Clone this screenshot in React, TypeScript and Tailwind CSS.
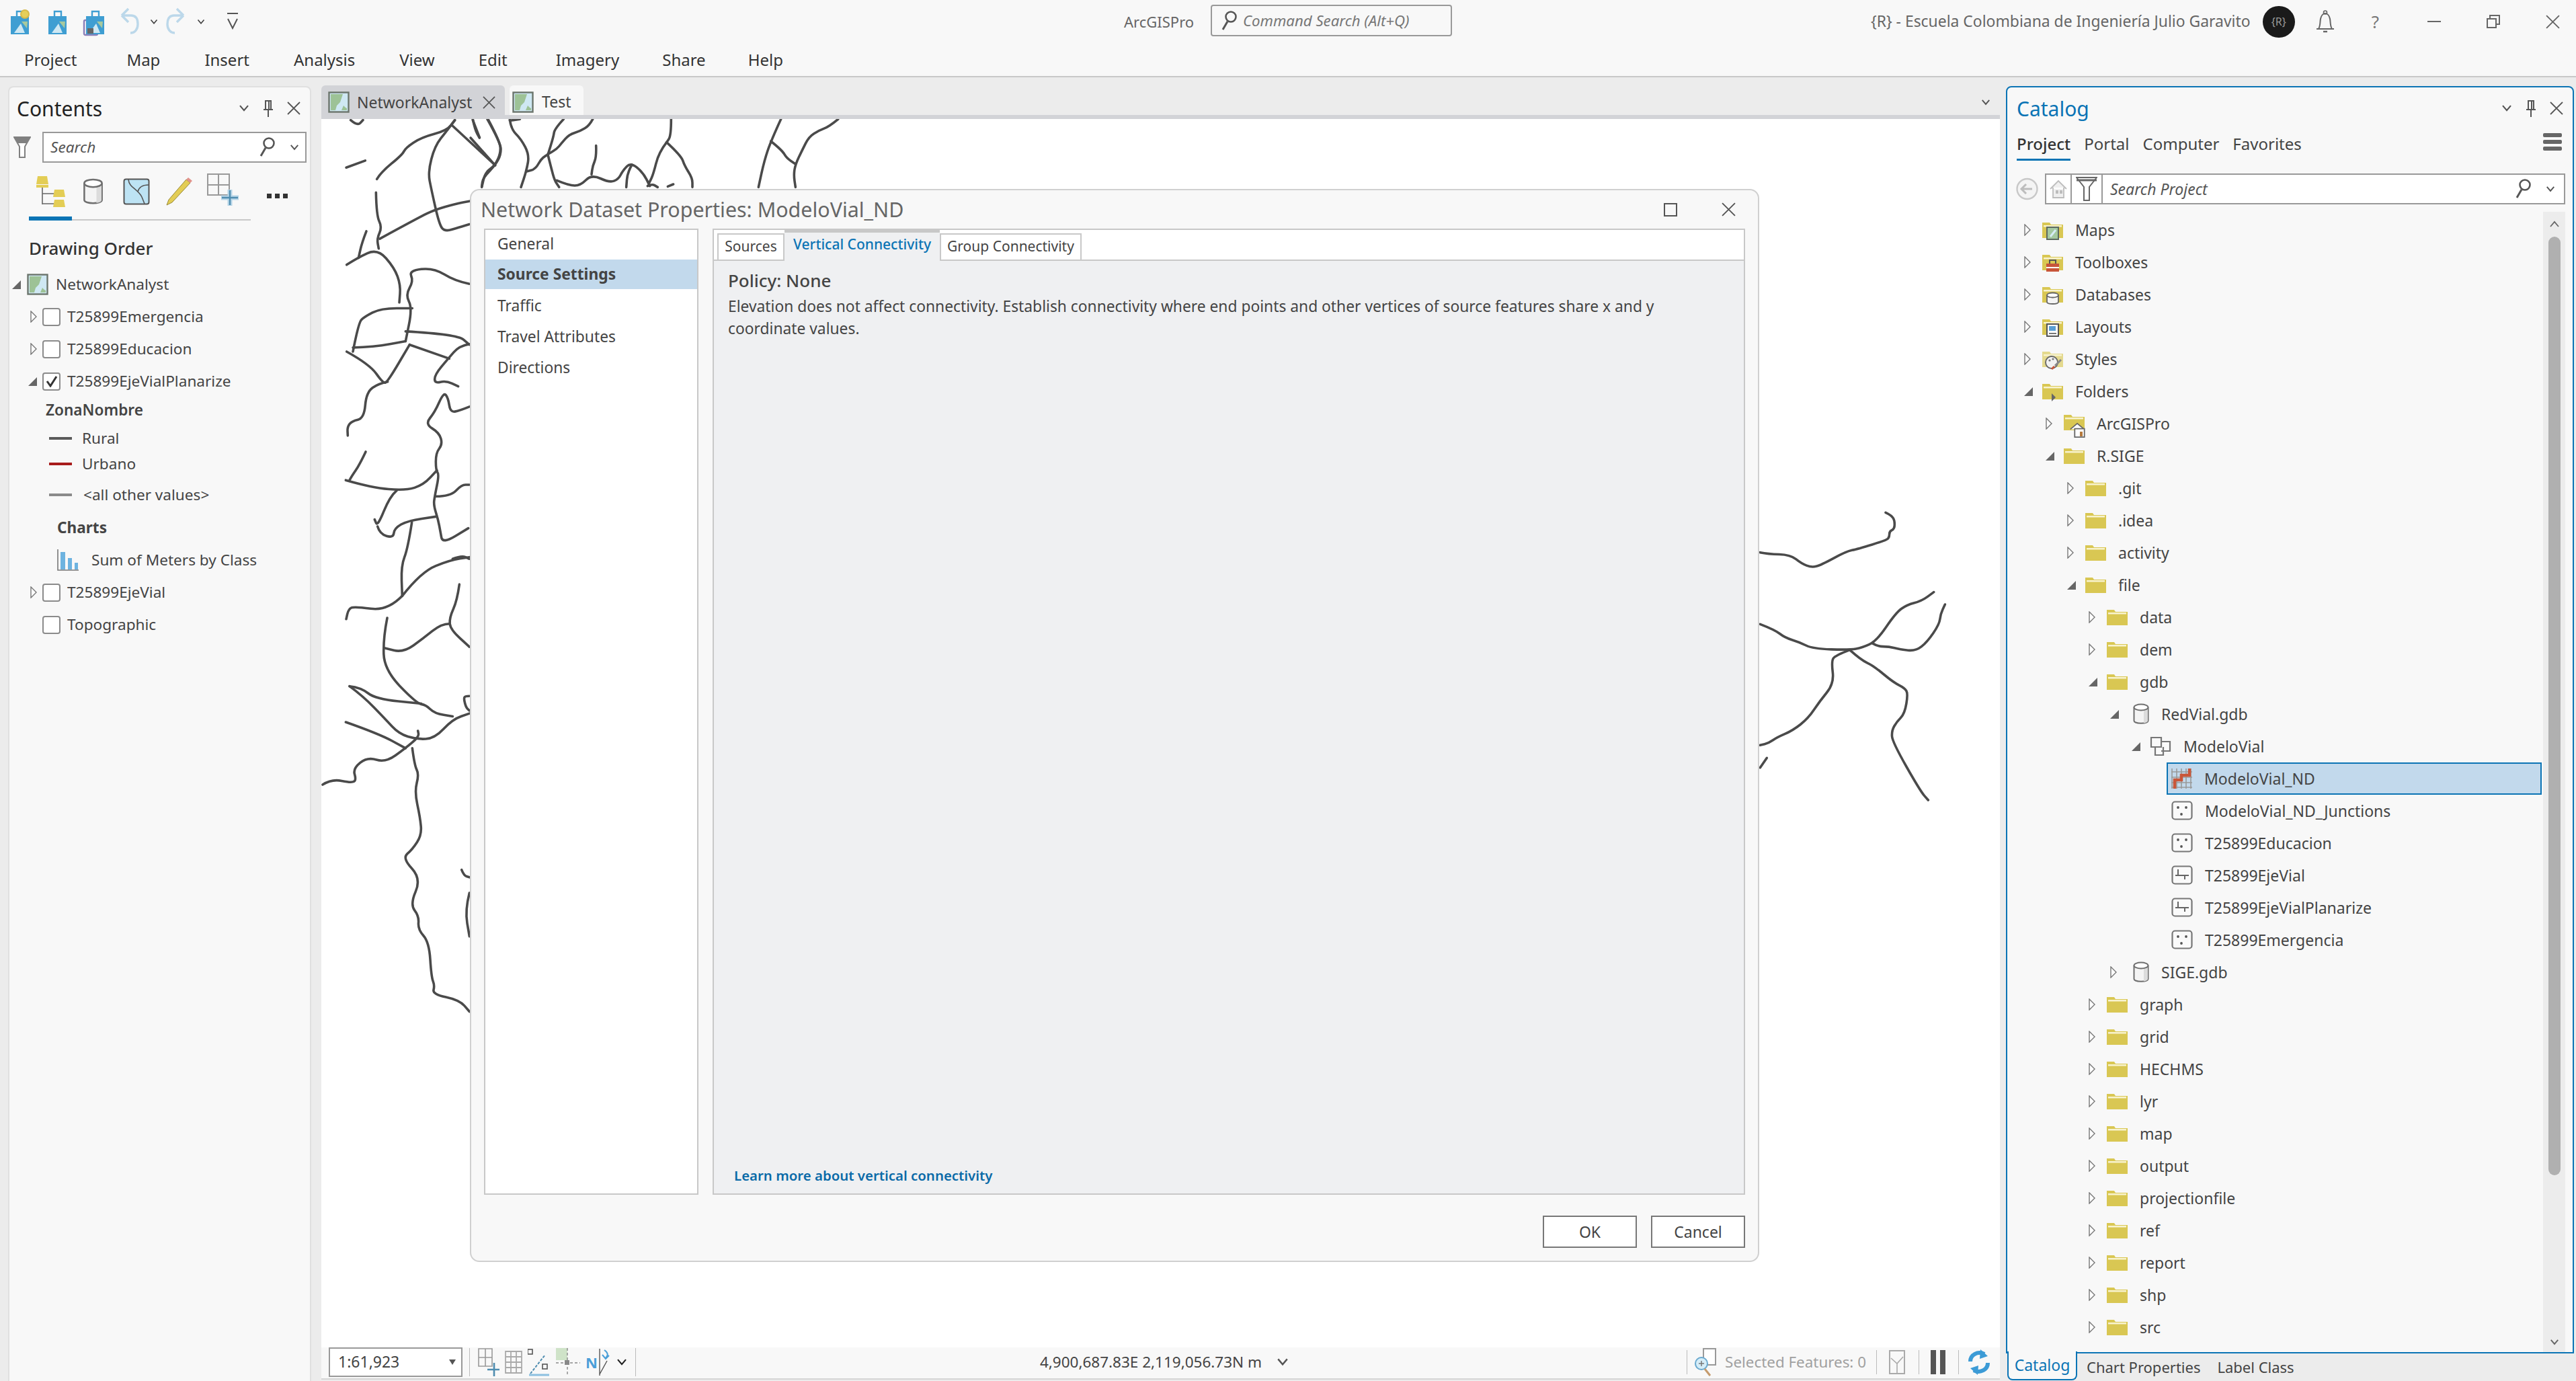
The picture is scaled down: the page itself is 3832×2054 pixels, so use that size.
import React from "react";

type Row = { label: string; level: number; state?: "open" | "closed"; icon?: string; selected?: boolean };

const catalogRows: Row[] = [
  { label: "Maps", level: 0, state: "closed", icon: "maps" },
  { label: "Toolboxes", level: 0, state: "closed", icon: "toolboxes" },
  { label: "Databases", level: 0, state: "closed", icon: "databases" },
  { label: "Layouts", level: 0, state: "closed", icon: "layouts" },
  { label: "Styles", level: 0, state: "closed", icon: "styles" },
  { label: "Folders", level: 0, state: "open", icon: "folders" },
  { label: "ArcGISPro", level: 1, state: "closed", icon: "home" },
  { label: "R.SIGE", level: 1, state: "open" },
  { label: ".git", level: 2, state: "closed" },
  { label: ".idea", level: 2, state: "closed" },
  { label: "activity", level: 2, state: "closed" },
  { label: "file", level: 2, state: "open" },
  { label: "data", level: 3, state: "closed" },
  { label: "dem", level: 3, state: "closed" },
  { label: "gdb", level: 3, state: "open" },
  { label: "RedVial.gdb", level: 4, state: "open", icon: "gdb" },
  { label: "ModeloVial", level: 5, state: "open", icon: "dataset" },
  { label: "ModeloVial_ND", level: 6, icon: "network", selected: true },
  { label: "ModeloVial_ND_Junctions", level: 6, icon: "points" },
  { label: "T25899Educacion", level: 6, icon: "points" },
  { label: "T25899EjeVial", level: 6, icon: "lines" },
  { label: "T25899EjeVialPlanarize", level: 6, icon: "lines" },
  { label: "T25899Emergencia", level: 6, icon: "points" },
  { label: "SIGE.gdb", level: 4, state: "closed", icon: "gdb" },
  { label: "graph", level: 3, state: "closed" },
  { label: "grid", level: 3, state: "closed" },
  { label: "HECHMS", level: 3, state: "closed" },
  { label: "lyr", level: 3, state: "closed" },
  { label: "map", level: 3, state: "closed" },
  { label: "output", level: 3, state: "closed" },
  { label: "projectionfile", level: 3, state: "closed" },
  { label: "ref", level: 3, state: "closed" },
  { label: "report", level: 3, state: "closed" },
  { label: "shp", level: 3, state: "closed" },
  { label: "src", level: 3, state: "closed" },
];

// traced from the map, each group has its own origin and scale
const roadGroups = [
  {
    ox: 470,
    oy: 170,
    sx: 1 / 3,
    sy: 0.861,
    lines: [
      "135,92 220,80",
      "272,112 290,100 385,70 400,58 470,40 585,28 620,10",
      "155,10 185,20 210,10",
      "620,10 585,28 530,55 500,100 515,130 550,190 575,203 640,195 685,190",
      "610,20 800,88",
      "770,10 825,50 825,70 800,88 745,110 740,125",
      "700,10 730,40",
      "268,135 270,175 295,195 272,215 280,232",
      "285,215 460,178 530,165 620,155 685,150",
      "137,260 185,248 275,232 350,265 378,295 372,325",
      "225,202 205,222 190,248",
      "685,293 620,288 525,265 415,270 435,288 400,312 430,335 400,392",
      "165,410 190,360 215,350 290,335 430,335",
      "165,403 260,402 400,392",
      "137,410 240,432 300,465 320,462 418,398",
      "400,375 630,380 685,398",
      "418,398 595,422",
      "685,397 640,400 590,422 530,450 530,465 580,460 635,470",
      "320,462 280,465 225,480 215,525 160,530 140,540 142,555",
      "222,583 195,605 160,625 150,632",
      "133,632 250,645 400,650 480,640 540,615",
      "685,505 640,512 600,515 590,490 570,480 530,515 487,535 550,550 565,570 535,585 535,615 550,622 530,660 525,675 545,700 555,720 565,742 680,715",
      "535,660 600,660 650,640 685,640",
      "360,650 330,660 275,712 262,700",
      "275,712 285,725 345,732 350,715 410,702 535,695",
      "428,705 410,750 380,780 385,832",
      "385,832 320,858 170,850 145,855 135,872",
      "385,832 470,790 600,770 685,765",
      "610,768 650,762 685,768",
      "640,812 630,840 595,870 600,890 685,920",
      "595,880 560,880 480,905 390,930 305,922",
      "318,870 300,905 305,960 450,1018 490,1020 530,1035 610,1040",
      "150,988 200,990 265,1010 470,1018",
      "150,988 210,1005 310,1045 370,1070 450,1080 530,1078 610,1045 685,1035",
      "133,1050 280,1070 400,1095",
      "30,1158 70,1148 160,1155 180,1150 165,1130 230,1110 310,1120 400,1095 460,1075 455,1065",
      "430,1095 440,1125 460,1140 440,1170 465,1215 472,1245 430,1270 385,1285 470,1320 420,1365 460,1385 455,1408 505,1430 515,1490 530,1505 520,1520 640,1530 685,1550",
      "650,1305 660,1315 685,1318",
      "685,1345 665,1375 685,1420",
      "685,1005 665,1005 660,1010 670,1025 685,1030",
    ],
  },
  {
    ox: 700,
    oy: 170,
    sx: 1 / 3,
    sy: 1 / 3,
    lines: [
      "10,22 20,70 40,105",
      "75,22 130,120 135,170 110,228 65,260 50,325",
      "0,105 110,228",
      "175,22 180,65 225,110 262,180 250,250 225,325",
      "175,28 220,22",
      "415,22 375,65 370,100 345,180",
      "545,22 530,50 490,75 440,90 405,130 385,155 345,178",
      "345,180 320,190 290,245 250,255",
      "345,180 360,240 375,295 395,325",
      "385,295 440,318 490,318 540,268 620,305 660,290 680,250 715,215 770,260 800,320",
      "560,140 562,190 545,230 540,268",
      "720,225 700,260 695,325",
      "790,320 810,310 835,325",
      "880,322 905,312",
      "895,22 895,95 875,125",
      "875,125 840,170 815,270 795,310",
      "875,125 940,185 955,230 990,285 990,325",
      "1385,22 1340,120 1310,210 1285,325",
      "1340,120 1390,160 1410,195 1450,222",
      "1640,22 1600,55 1555,72 1510,100 1480,160 1450,222 1442,270 1450,325",
    ],
  },
  {
    ox: 2600,
    oy: 740,
    sx: 1 / 3,
    sy: 1 / 3,
    lines: [
      "55,245 90,252 190,255 240,295 285,312 325,302 440,240 490,230 620,190 632,175 632,150 655,140 655,100 640,80 615,67",
      "55,565 120,590 165,625 230,645 290,675 455,680 510,670 575,640 660,515 710,478 775,462 830,422",
      "555,650 580,665 630,665 680,678 750,685 800,645 855,565 860,520 880,477",
      "455,680 390,705 373,730 385,830 320,910 270,985 200,1040 130,1070 95,1095 55,1105",
      "455,680 505,725 560,750 650,825 700,850 715,875 700,965 665,1000 642,1040 645,1090 770,1310 805,1350",
      "85,1162 55,1205",
    ],
  },
];

const toPath = (line: string, ox: number, oy: number, sx: number, sy: number) => {
  const pts = line.split(" ").map((p) => {
    const [x, y] = p.split(",").map(Number);
    return [ox + x * sx, oy + y * sy];
  });
  let d = `M${pts[0][0]} ${pts[0][1]}`;
  for (let i = 1; i < pts.length - 1; i++) {
    const mx = (pts[i][0] + pts[i + 1][0]) / 2;
    const my = (pts[i][1] + pts[i + 1][1]) / 2;
    d += ` Q${pts[i][0]} ${pts[i][1]} ${mx} ${my}`;
  }
  const last = pts[pts.length - 1];
  return d + ` L${last[0]} ${last[1]}`;
};

const Chevron = ({ w = 16, color = "#555" }: { w?: number; color?: string }) => (
  <svg width={w} height={w * 0.7} viewBox="0 0 16 11" className="shrink-0">
    <path d="M2 2l6 7 6-7" fill="none" stroke={color} strokeWidth="2.2" />
  </svg>
);

const CloseX = ({ size = 20, color = "#555" }: { size?: number; color?: string }) => (
  <svg width={size} height={size} viewBox="0 0 20 20" className="shrink-0">
    <path d="M1 1l18 18M19 1L1 19" stroke={color} strokeWidth="1.8" />
  </svg>
);

const Pin = () => (
  <svg width="14" height="26" viewBox="0 0 14 26" className="shrink-0">
    <path d="M3 2h8v13H3zM0 15h14M7 15v11M8 2v13" fill="none" stroke="#555" strokeWidth="2" />
  </svg>
);

const Magnifier = () => (
  <svg width="24" height="32" viewBox="0 0 24 32" className="shrink-0">
    <circle cx="14" cy="10" r="7.5" fill="none" stroke="#555" strokeWidth="2.6" />
    <path d="M9 17L2 29" stroke="#555" strokeWidth="3" />
  </svg>
);

const Expander = ({ state }: { state?: "open" | "closed" }) => {
  if (state === "open")
    return (
      <svg width="13" height="13" viewBox="0 0 13 13" className="shrink-0">
        <path d="M13 0v13H0z" fill="#666" />
      </svg>
    );
  if (state === "closed")
    return (
      <svg width="10" height="18" viewBox="0 0 10 18" className="shrink-0">
        <path d="M1 1l8 8-8 8z" fill="#fff" stroke="#777" strokeWidth="1.4" />
      </svg>
    );
  return null;
};

const MapThumb = ({ size = 32 }: { size?: number }) => (
  <svg width={size} height={size} viewBox="0 0 32 32" className="shrink-0">
    <rect x="1.5" y="1.5" width="29" height="29" fill="#cfe8f3" stroke="#6b756c" strokeWidth="2.4" />
    <path d="M4 4h18l-4 12-5 5-2 7H4z" fill="#9dc296" />
    <path d="M28 28h-8l3-7 3 3 2 1z" fill="#9dc296" />
  </svg>
);

const Cylinder = ({ w = 24, h = 32 }: { w?: number; h?: number }) => (
  <svg width={w} height={h} viewBox="0 0 24 32" className="shrink-0">
    <path d="M1.5 6v20c0 5 21 5 21 0V6" fill="#f4f4f4" stroke="#6f6f6f" strokeWidth="2" />
    <path d="M16 8h6v18c0 2-3 3-6 3.5z" fill="#dcdcdc" />
    <ellipse cx="12" cy="6" rx="10.5" ry="4.5" fill="#fff" stroke="#6f6f6f" strokeWidth="2" />
  </svg>
);

const Overlay = ({ kind }: { kind: string }) => {
  if (kind === "maps")
    return (
      <g>
        <rect x="7" y="12" width="17" height="18" fill="#a4c8a0" stroke="#5d6a60" strokeWidth="2" />
        <path d="M12 26l8-10" stroke="#d6ecf5" strokeWidth="3" />
      </g>
    );
  if (kind === "toolboxes")
    return (
      <g>
        <rect x="6" y="18" width="19" height="12" fill="#c8553a" />
        <path d="M11 18v-5h9v5" fill="none" stroke="#555" strokeWidth="2" />
        <rect x="6" y="23" width="19" height="2" fill="#fff" />
      </g>
    );
  if (kind === "databases")
    return (
      <g>
        <path d="M7 17v10c0 4 17 4 17 0V17" fill="#f4f4f4" stroke="#666" strokeWidth="1.8" />
        <ellipse cx="15.5" cy="17" rx="8.5" ry="3.5" fill="#fff" stroke="#666" strokeWidth="1.8" />
      </g>
    );
  if (kind === "layouts")
    return (
      <g>
        <rect x="7" y="12" width="17" height="18" fill="#fff" stroke="#555" strokeWidth="2" />
        <rect x="10" y="15" width="10" height="7" fill="#5a9fd4" />
        <path d="M10 26h11" stroke="#777" strokeWidth="2" />
      </g>
    );
  if (kind === "styles")
    return (
      <g>
        <circle cx="14" cy="21" r="9" fill="#f2f2f2" stroke="#666" strokeWidth="1.8" />
        <circle cx="11" cy="18" r="1.6" fill="#777" />
        <circle cx="16" cy="16" r="1.6" fill="#777" />
        <path d="M19 26l9-9" stroke="#888" strokeWidth="3" />
        <path d="M14 31l4-4" stroke="#c8553a" strokeWidth="3" />
      </g>
    );
  if (kind === "folders") return <path d="M14 19l6 6-6 6z" fill="#666" />;
  return null;
};

const FolderIcon = ({ overlay }: { overlay?: string }) => (
  <svg width="31" height="32" viewBox="0 0 31 32" className="shrink-0 overflow-visible">
    <path d="M0 28V5h11l2 3h18v20z" fill={overlay === "styles" ? "#e4d98e" : "#d9c753"} />
    <path d="M2 9h27v2.5H2z" fill="#f8f3cf" />
    {overlay ? <Overlay kind={overlay} /> : null}
  </svg>
);

const HomeFolder = () => (
  <svg width="31" height="32" viewBox="0 0 31 32" className="shrink-0 overflow-visible">
    <path d="M0 26V3h11l2 3h18v20z" fill="#d9c753" />
    <path d="M2 7h27v2.5H2z" fill="#f8f3cf" />
    <path d="M14 24l12-10 12 10" fill="#fff" stroke="#666" strokeWidth="2" transform="translate(-2 4) scale(.85)" />
    <path d="M17 24h16v14H17z" fill="#fff" stroke="#666" strokeWidth="2" transform="translate(1 2) scale(.9)" />
    <rect x="24" y="28" width="4" height="7" fill="#b5793c" />
  </svg>
);

const FeatureClass = ({ kind }: { kind: "points" | "lines" }) => (
  <svg width="32" height="30" viewBox="0 0 32 30" className="shrink-0">
    <rect x="1.5" y="1.5" width="29" height="26" rx="4" fill="#fafafa" stroke="#777" strokeWidth="2.2" />
    {kind === "points" ? (
      <g fill="#555">
        <circle cx="10" cy="10" r="1.9" />
        <circle cx="22" cy="10" r="1.9" />
        <circle cx="15" cy="20" r="1.9" />
      </g>
    ) : (
      <path d="M10 6v9H6M10 15h16M20 15v6" fill="none" stroke="#666" strokeWidth="2" />
    )}
  </svg>
);

const NetworkIcon = () => (
  <svg width="31" height="32" viewBox="0 0 31 32" className="shrink-0">
    <path d="M1 1v30M8 1v30M15 1v30M22 1v30M29 1v30M0 6h31M0 14h31M0 22h31M0 29h31" stroke="#9a9a9a" strokeWidth="1.6" />
    <path d="M5 31V18h10v-7h12V1" fill="none" stroke="#c9573a" strokeWidth="4.5" />
  </svg>
);

const DatasetIcon = () => (
  <svg width="32" height="30" viewBox="0 0 32 30" className="shrink-0">
    <path d="M2 2h15v14H2zM17 8h13v14H17M8 16v12h12V16" fill="#fafafa" stroke="#777" strokeWidth="2.2" />
  </svg>
);

const treeIcon = (icon?: string) => {
  if (icon === "gdb") return <div className="ml-[6px] flex w-[25px] justify-center"><Cylinder /></div>;
  if (icon === "dataset") return <DatasetIcon />;
  if (icon === "network") return <NetworkIcon />;
  if (icon === "points") return <FeatureClass kind="points" />;
  if (icon === "lines") return <FeatureClass kind="lines" />;
  if (icon === "home") return <HomeFolder />;
  return <FolderIcon overlay={icon} />;
};

const TreeRow = ({ row }: { row: Row }) => (
  <div className="flex h-[48px] items-center" style={{ paddingLeft: row.level * 32 }}>
    <div className="flex h-full w-[23px] shrink-0 items-center pl-[3px]">
      <Expander state={row.state} />
    </div>
    <div
      className={
        row.selected
          ? "flex h-full flex-1 items-center gap-[18px] border-2 border-[#0b74b5] bg-[#c2d9ec] pl-[5px]"
          : "flex h-full flex-1 items-center gap-[18px] pl-[7px]"
      }
    >
      {treeIcon(row.icon)}
      <span className="whitespace-nowrap">{row.label}</span>
    </div>
  </div>
);

const Checkbox = ({ checked }: { checked?: boolean }) => (
  <div className="flex h-[27px] w-[27px] shrink-0 items-center justify-center rounded-[4px] border-2 border-[#8b8b8b] bg-white">
    {checked ? (
      <svg width="18" height="18" viewBox="0 0 18 18">
        <path d="M2 9l5 7L16 2" fill="none" stroke="#333" strokeWidth="3" />
      </svg>
    ) : null}
  </div>
);

const LayerRow = ({ label, state, checked }: { label: string; state?: "open" | "closed"; checked?: boolean }) => (
  <div className="flex h-[48px] items-center">
    <div className="flex w-[49px] shrink-0 items-center justify-end pr-[8px]">
      <Expander state={state} />
    </div>
    <Checkbox checked={checked} />
    <span className="ml-[10px] whitespace-nowrap">{label}</span>
  </div>
);

const Legend = ({ label, color, h, gap }: { label: string; color: string; h: string; gap: string }) => (
  <div className={`flex items-center ${h}`}>
    <div className={`ml-[59px] h-[4px] w-[34px] ${color}`} />
    <span className={`whitespace-nowrap ${gap}`}>{label}</span>
  </div>
);

const QatIcon = ({ kind }: { kind: "new" | "open" | "save" }) => (
  <svg width="33" height="40" viewBox="0 0 33 40" className="shrink-0 overflow-visible">
    {kind === "save" ? <rect x="0" y="18" width="20" height="22" rx="2" fill="#f0eef6" stroke="#8b7fb8" strokeWidth="2.4" /> : null}
    <path d="M3 12h27v27H3z" fill="#3f9ed2" />
    <path d="M12 12V5h10v7" fill="none" stroke="#3f9ed2" strokeWidth="2.4" />
    <path d="M8 37l10-14 6 14z" fill="#cfe8f3" />
    <path d="M19 20l9 0-1 10z" fill="#a8c99e" />
    {kind === "new" ? <circle cx="24" cy="9" r="6" fill="#e6cf5a" stroke="#d6b94a" strokeWidth="2" /> : null}
    {kind === "save" ? <rect x="5" y="30" width="9" height="8" fill="#666" /> : null}
  </svg>
);

const Undo = ({ flip }: { flip?: boolean }) => (
  <svg width="30" height="42" viewBox="0 0 30 42" className={flip ? "shrink-0 -scale-x-100" : "shrink-0"}>
    <path d="M3 12L13 2M3 12l10 10M3 12h14c8 0 10 6 10 13s-4 13-11 13" fill="none" stroke="#bcd8ea" strokeWidth="3.4" />
  </svg>
);

const ToolIcons = () => (
  <div className="mt-[21px] flex h-[44px] items-center pl-[39px]">
    <svg width="46" height="46" viewBox="0 0 46 46" className="shrink-0">
      <path d="M3 0h14l2 12H1zM1 13h18v4H1z" fill="#e3cd55" />
      <path d="M10 17v25M10 26h18M10 41h18" fill="none" stroke="#666" strokeWidth="1.6" />
      <path d="M28 20h14l2 11H26zM28 35h14l2 11H26z" fill="#e3cd55" />
    </svg>
    <div className="ml-[19px]"><Cylinder w={41} h={40} /></div>
    <svg width="40" height="40" viewBox="0 0 40 40" className="ml-[24px] shrink-0">
      <rect x="1.5" y="1.5" width="37" height="37" rx="3" fill="#bde3f4" stroke="#555" strokeWidth="2" />
      <path d="M8 2c1 12 14 14 20 26l4 10M22 20c2-8 8-10 16-10" fill="none" stroke="#555" strokeWidth="1.6" />
    </svg>
    <svg width="40" height="44" viewBox="0 0 40 44" className="ml-[24px] shrink-0">
      <path d="M1 42l3-8L30 4l6 5L9 38z" fill="#e3cd55" stroke="#998a3a" strokeWidth="1" />
      <path d="M30 4l3-3 6 5-3 3z" fill="#e2938b" />
    </svg>
    <svg width="47" height="48" viewBox="0 0 47 48" className="ml-[21px] -mt-[6px] shrink-0">
      <path d="M1 1h32v31H1zM1 17h32M17 1v31" fill="none" stroke="#999" strokeWidth="2" />
      <path d="M34 24v24M21 36h26" stroke="#b7d6e8" strokeWidth="7" />
      <path d="M34 25v22M22 36h24" stroke="#4f8db0" strokeWidth="2.4" />
    </svg>
    <div className="ml-[42px] mt-[12px] flex gap-[5px]">
      <div className="h-[7px] w-[7px] bg-[#333]" />
      <div className="h-[7px] w-[7px] bg-[#333]" />
      <div className="h-[7px] w-[7px] bg-[#333]" />
    </div>
  </div>
);

const ContentsPanel = () => (
  <div className="ml-[12px] mt-[13px] flex w-[451px] shrink-0 flex-col rounded-t-[8px] border-x-2 border-t-2 border-[#e0e0e0] bg-[#f8f8f8] text-[22.6px] text-[#444]">
    <div className="flex h-[62px] shrink-0 items-center pl-[11px] pr-[14px]">
      <span className="text-[30px] text-[#222]">Contents</span>
      <div className="ml-auto flex items-center gap-[21px]">
        <Chevron />
        <Pin />
        <CloseX />
      </div>
    </div>
    <div className="mt-[4px] flex h-[46px] items-center pl-[6px] pr-[5px]">
      <svg width="26" height="32" viewBox="0 0 26 32" className="shrink-0">
        <path d="M1 1h24l-8 14v16H9V15z" fill="#fff" stroke="#808080" strokeWidth="2" />
        <path d="M1 1h24l-5 9H6z" fill="#808080" />
      </svg>
      <div className="ml-[17px] flex h-full flex-1 items-center border-2 border-[#999] bg-white pl-[10px] pr-[9px]">
        <span className="italic text-[#555]">Search</span>
        <div className="ml-auto flex items-center gap-[21px]">
          <Magnifier />
          <Chevron w={14} />
        </div>
      </div>
    </div>
    <ToolIcons />
    <div className="ml-[29px] mt-[15px] flex h-[6px] w-[330px] items-end bg-transparent">
      <div className="h-[6px] w-[64px] bg-[#0b74b5]" />
      <div className="h-[2px] flex-1 bg-[#c8c8c8]" />
    </div>
    <div className="ml-[29px] mt-[23px] flex h-[36px] items-center text-[26px] font-medium text-[#333]">Drawing Order</div>
    <div className="mt-[12px] flex flex-col">
      <div className="flex h-[48px] items-center pl-[4px]">
        <Expander state="open" />
        <div className="ml-[9px]"><MapThumb /></div>
        <span className="ml-[11px]">NetworkAnalyst</span>
      </div>
      <LayerRow label="T25899Emergencia" state="closed" />
      <LayerRow label="T25899Educacion" state="closed" />
      <LayerRow label="T25899EjeVialPlanarize" state="open" checked />
      <div className="ml-[54px] flex h-[38px] items-center font-semibold">ZonaNombre</div>
      <Legend label="Rural" color="bg-[#5a5a5a]" h="h-[46px]" gap="ml-[15px]" />
      <Legend label="Urbano" color="bg-[#a81c1c]" h="h-[30px]" gap="ml-[15px]" />
      <Legend label="<all other values>" color="bg-[#8a8a8a]" h="h-[62px]" gap="ml-[17px]" />
      <div className="ml-[71px] flex h-[36px] items-center font-bold">Charts</div>
      <div className="ml-[71px] flex h-[60px] items-center">
        <svg width="32" height="32" viewBox="0 0 32 32" className="shrink-0">
          <path d="M1 0v31h31" fill="none" stroke="#777" strokeWidth="1.6" />
          <path d="M5 4h7v26H5zM16 13h6v17h-6zM26 20h5v10h-5z" fill="#6db3e0" />
        </svg>
        <span className="ml-[19px] whitespace-nowrap">Sum of Meters by Class</span>
      </div>
      <div className="-mt-[6px]"><LayerRow label="T25899EjeVial" state="closed" /></div>
      <LayerRow label="Topographic" />
    </div>
  </div>
);

const StatusIcons = () => (
  <div className="ml-[10px] flex items-center gap-[8px] border-x border-[#bbb] px-[12px]">
    <svg width="32" height="42" viewBox="0 0 32 42" className="shrink-0">
      <path d="M1 1h20v26H1zM1 14h20M11 1v26" fill="none" stroke="#999" strokeWidth="1.6" />
      <path d="M24 22v20M14 32h18" stroke="#4f8db0" strokeWidth="2.6" />
    </svg>
    <svg width="26" height="34" viewBox="0 0 26 34" className="shrink-0">
      <path d="M1 1h24v32H1zM1 9h24M1 17h24M1 25h24M9 1v32M17 1v32" fill="none" stroke="#aaa" strokeWidth="1.8" />
    </svg>
    <svg width="34" height="42" viewBox="0 0 34 42" className="shrink-0">
      <path d="M4 38L26 10" stroke="#4f8db0" strokeWidth="2" strokeDasharray="4 2" />
      <rect x="0" y="2" width="7" height="7" fill="none" stroke="#555" strokeWidth="1.6" />
      <path d="M2 40h30" stroke="#8cc0e0" strokeWidth="3" />
      <rect x="22" y="24" width="7" height="7" fill="none" stroke="#555" strokeWidth="1.6" />
    </svg>
    <svg width="36" height="42" viewBox="0 0 36 42" className="shrink-0">
      <rect x="0" y="0" width="17" height="18" fill="#cfe3c8" />
      <path d="M17 0v42" stroke="#888" strokeWidth="1.4" strokeDasharray="4 3" />
      <path d="M0 22h36" stroke="#888" strokeWidth="1.4" strokeDasharray="4 3" />
      <rect x="13" y="18" width="7" height="7" fill="#888" />
    </svg>
    <div className="flex items-center gap-[8px]">
      <span className="text-[22px] font-bold leading-none text-[#4b9fd8]">N</span>
      <svg width="18" height="40" viewBox="0 0 18 40" className="-ml-[6px] shrink-0">
        <path d="M1 0v40M1 38L12 18" stroke="#555" strokeWidth="1.4" fill="none" />
        <path d="M8 2c6 4 6 8 2 12M5 9l5 6 5-5" stroke="#4b9fd8" strokeWidth="2" fill="none" />
      </svg>
      <Chevron w={16} color="#222" />
    </div>
  </div>
);

const MapView = () => (
  <div className="ml-[15px] flex w-[2497px] shrink-0 flex-col">
    <div className="mt-[12px] flex h-[50px] shrink-0 items-start border-b-[6px] border-[#d2d3d7] text-[23px] text-[#444]">
      <div className="-mb-[6px] flex h-[50px] w-[273px] items-center rounded-t-[6px] bg-[#d2d3d7] pl-[10px]">
        <MapThumb />
        <span className="ml-[11px]">NetworkAnalyst</span>
        <div className="ml-[16px]"><CloseX size={19} /></div>
      </div>
      <div className="ml-[7px] flex h-[44px] w-[110px] items-center rounded-t-[6px] bg-[#f8f8f8] pl-[4px] pt-[5px]">
        <MapThumb />
        <span className="ml-[12px]">Test</span>
      </div>
      <div className="ml-auto mr-[14px] mt-[20px]"><Chevron w={14} /></div>
    </div>
    <div className="h-[1827px] shrink-0 bg-white">
      <svg width="2497" height="1827" viewBox="478 177 2497 1827" className="block">
        <g fill="none" stroke="#4a4a4a" strokeWidth="3.6" strokeLinejoin="round" strokeLinecap="round">
          {roadGroups.map((g) =>
            g.lines.map((l) => <path key={g.ox + l} d={toPath(l, g.ox, g.oy, g.sx, g.sy)} />)
          )}
        </g>
      </svg>
    </div>
    <div className="flex h-[48px] shrink-0 items-center border-b-2 border-[#d5d5d5] bg-[#f8f8f8] pb-[3px] text-[#444]">
      <div className="ml-[11px] flex h-[44px] w-[199px] items-center border-2 border-[#999] bg-white pl-[12px] pr-[8px] text-[23px]">
        1:61,923
        <svg width="10" height="8" viewBox="0 0 10 8" className="ml-auto">
          <path d="M0 0h10L5 8z" fill="#555" />
        </svg>
      </div>
      <StatusIcons />
      <span className="ml-[601px] whitespace-nowrap text-[22.5px]">4,900,687.83E 2,119,056.73N m</span>
      <div className="ml-[22px] flex flex-col">
        <Chevron w={18} />
      </div>
      <div className="ml-auto flex h-[40px] items-center pr-[15px]">
        <div className="h-[36px] w-px bg-[#bbb]" />
        <svg width="36" height="44" viewBox="0 0 36 44" className="ml-[10px] shrink-0">
          <path d="M14 2h18v24H14z" fill="#fff" stroke="#999" strokeWidth="2" />
          <circle cx="11" cy="24" r="9" fill="#d5edf8" stroke="#6aa9cf" strokeWidth="2" />
          <path d="M7 24h8M11 20v8" stroke="#777" strokeWidth="1.5" />
          <path d="M16 32l8 10" stroke="#c59b6d" strokeWidth="3" />
        </svg>
        <span className="ml-[10px] whitespace-nowrap text-[22.4px] text-[#a0a0a0]">Selected Features: 0</span>
        <div className="ml-[15px] h-[36px] w-px bg-[#bbb]" />
        <svg width="24" height="36" viewBox="0 0 24 36" className="ml-[18px] shrink-0">
          <path d="M1 1h22v34H1z" fill="none" stroke="#aaa" strokeWidth="2" />
          <path d="M3 12l9 8 9-10M12 20v14" fill="none" stroke="#aaa" strokeWidth="1.6" />
        </svg>
        <div className="ml-[20px] h-[36px] w-px bg-[#bbb]" />
        <div className="ml-[17px] flex gap-[6px]">
          <div className="h-[36px] w-[8px] bg-[#555]" />
          <div className="h-[36px] w-[8px] bg-[#555]" />
        </div>
        <div className="ml-[19px] h-[36px] w-px bg-[#bbb]" />
        <svg width="32" height="42" viewBox="0 0 32 42" className="ml-[14px] shrink-0">
          <path d="M3 20C3 10 14 4 24 9M29 22c0 10-11 16-21 11" fill="none" stroke="#3c9bd6" strokeWidth="6" />
          <path d="M18 2l11 10-12 4zM14 40L3 30l12-4z" fill="#3c9bd6" />
        </svg>
      </div>
    </div>
  </div>
);

const CatalogPanel = () => (
  <div className="ml-[9px] flex w-[845px] shrink-0 flex-col">
    <div className="mt-[13px] flex h-[1885px] flex-col overflow-hidden rounded-t-[8px] border-2 border-[#0b74b5] bg-[#f8f8f8] text-[23px] text-[#444]">
      <div className="flex h-[62px] shrink-0 items-center pl-[14px] pr-[14px]">
        <span className="text-[30px] text-[#0b74b5]">Catalog</span>
        <div className="ml-auto flex items-center gap-[21px]">
          <Chevron />
          <Pin />
          <CloseX />
        </div>
      </div>
      <div className="flex h-[47px] shrink-0 items-start pl-[14px] pr-[16px] pt-[4px] text-[24px]">
        <div className="border-b-[3px] border-[#0b74b5] pb-[5px] font-medium leading-[35px] text-[#333]">Project</div>
        <div className="ml-[20px] leading-[35px]">Portal</div>
        <div className="ml-[20px] leading-[35px]">Computer</div>
        <div className="ml-[20px] leading-[35px]">Favorites</div>
        <div className="ml-auto mt-[2px] flex flex-col gap-[4px]">
          <div className="h-[6px] w-[28px] rounded-[2px] bg-[#666]" />
          <div className="h-[6px] w-[28px] rounded-[2px] bg-[#666]" />
          <div className="h-[6px] w-[28px] rounded-[2px] bg-[#666]" />
        </div>
      </div>
      <div className="mt-[19px] flex h-[46px] shrink-0 items-center pl-[13px] pr-[11px]">
        <svg width="33" height="38" viewBox="0 0 33 38" className="shrink-0">
          <circle cx="16.5" cy="19" r="15" fill="#f4f4f4" stroke="#c8c8c8" strokeWidth="2.4" />
          <path d="M24 19H9M15 12l-7 7 7 7" fill="none" stroke="#bdbdbd" strokeWidth="3" />
        </svg>
        <div className="ml-[10px] flex h-full flex-1 items-center border-2 border-[#999] bg-white">
          <div className="flex h-full w-[38px] shrink-0 items-center justify-center border-r-2 border-[#999]">
            <svg width="26" height="28" viewBox="0 0 26 28">
              <path d="M1 14L13 2l12 12M5 12v15h16V12" fill="#f0f0f0" stroke="#bdbdbd" strokeWidth="1.8" />
              <rect x="9" y="16" width="4" height="5" fill="#bdbdbd" />
              <rect x="15" y="16" width="4" height="5" fill="#bdbdbd" />
            </svg>
          </div>
          <div className="flex h-full w-[46px] shrink-0 items-center justify-center border-r-2 border-[#999]">
            <svg width="32" height="36" viewBox="0 0 32 36">
              <path d="M1 1h30l-11 14v20h-8V15z" fill="#fff" stroke="#666" strokeWidth="2" />
              <path d="M1 5h30" stroke="#666" strokeWidth="3" />
            </svg>
          </div>
          <span className="ml-[11px] italic text-[#555]">Search Project</span>
          <div className="ml-auto flex items-center gap-[21px] pr-[13px]">
            <Magnifier />
            <Chevron w={14} />
          </div>
        </div>
      </div>
      <div className="mt-[11px] flex min-h-0 flex-1 pl-[22px] pr-[11px]">
        <div className="flex min-w-0 flex-1 flex-col pt-[3px]">
          {catalogRows.map((r) => (
            <TreeRow key={r.label + r.level} row={r} />
          ))}
        </div>
        <div className="ml-[2px] flex w-[33px] shrink-0 flex-col items-center bg-[#ececec]">
          <svg width="16" height="10" viewBox="0 0 16 10" className="mt-[13px] shrink-0">
            <path d="M2 9l6-7 6 7" fill="none" stroke="#666" strokeWidth="1.8" />
          </svg>
          <div className="mt-[14px] h-[1396px] w-[18px] rounded-full bg-[#b0b0b0]" />
          <div className="mt-auto mb-[10px]"><Chevron w={14} color="#666" /></div>
        </div>
      </div>
    </div>
    <div className="flex h-[41px] shrink-0 items-center text-[22px] text-[#444]">
      <div className="-mt-[4px] ml-[2px] flex h-[43px] w-[104px] items-center justify-center rounded-b-[8px] border-x-2 border-b-2 border-[#0b74b5] bg-[#f8f8f8] text-[23px] text-[#0b74b5]">Catalog</div>
      <span className="ml-[14px] whitespace-nowrap">Chart Properties</span>
      <span className="ml-[25px] whitespace-nowrap">Label Class</span>
    </div>
  </div>
);

const Dialog = () => (
  <div className="absolute left-[699px] top-[281px] flex h-[1596px] w-[1918px] flex-col rounded-[14px] border-2 border-[#d0d0d0] bg-[#f8f8f8] pl-[19px] pr-[19px] text-[#444]">
    <div className="flex h-[57px] shrink-0 items-center">
      <span className="-ml-[5px] text-[30.4px] text-[#666]">Network Dataset Properties: ModeloVial_ND</span>
      <svg width="20" height="20" viewBox="0 0 20 20" className="ml-auto shrink-0 mr-[66px]">
        <rect x="1" y="1" width="18" height="18" fill="none" stroke="#555" strokeWidth="2" />
      </svg>
      <div className="mr-[14px]"><CloseX size={21} /></div>
    </div>
    <div className="flex h-[1437px] shrink-0 gap-[21px]">
      <div className="flex w-[319px] shrink-0 flex-col border-2 border-[#c8c8c8] bg-white text-[22.8px]">
        <div className="flex h-[42px] items-center pl-[18px]">General</div>
        <div className="mt-[2px] flex h-[44px] items-center bg-[#c2d9ec] pl-[18px] font-bold">Source Settings</div>
        <div className="mt-[2px] flex h-[46px] items-center pl-[18px]">Traffic</div>
        <div className="flex h-[46px] items-center pl-[18px]">Travel Attributes</div>
        <div className="flex h-[46px] items-center pl-[18px]">Directions</div>
      </div>
      <div className="flex flex-1 flex-col border-2 border-[#c8c8c8] bg-white">
        <div className="flex h-[44px] shrink-0 items-end pl-[5px] text-[21px]">
          <div className="flex h-[39px] w-[100px] items-center justify-center border-2 border-b-0 border-[#c8c8c8] pb-[2px]">Sources</div>
          <div className="relative z-10 -mb-[2px] flex h-[46px] w-[231px] items-start justify-center border-t-[4px] border-[#c8c8c8] bg-[#eff0f2] pt-[2px] font-medium text-[#0b74b5]">
            Vertical Connectivity
          </div>
          <div className="flex h-[39px] w-[211px] items-center justify-center border-2 border-b-0 border-[#c8c8c8] pb-[2px]">Group Connectivity</div>
        </div>
        <div className="flex flex-1 flex-col border-t-2 border-[#c8c8c8] bg-[#eff0f2] pl-[21px]">
          <div className="mt-[9px] flex h-[40px] items-center text-[26px] font-medium">Policy: None</div>
          <p className="mt-[2px] whitespace-nowrap text-[22.8px] leading-[33px]">
            Elevation does not affect connectivity. Establish connectivity where end points and other vertices of source features share x and y
            <br />
            coordinate values.
          </p>
          <div className="mb-[12px] ml-[9px] mt-auto flex h-[30px] items-center text-[20.4px] font-semibold text-[#0a6aa8]">Learn more about vertical connectivity</div>
        </div>
      </div>
    </div>
    <div className="mt-[31px] flex justify-end gap-[21px] text-[23px]">
      <div className="flex h-[48px] w-[140px] items-center justify-center border-2 border-[#777] bg-white">OK</div>
      <div className="flex h-[48px] w-[140px] items-center justify-center border-2 border-[#777] bg-white">Cancel</div>
    </div>
  </div>
);

export default function App() {
  return (
    <div className="relative flex h-[2054px] w-[3832px] flex-col overflow-hidden bg-[#f8f8f8] font-['Noto_Sans',sans-serif] text-[#444]">
      <div className="flex h-[64px] shrink-0 items-center">
        <div className="flex w-[1672px] shrink-0 items-center pl-[13px]">
          <QatIcon kind="new" />
          <div className="ml-[23px]"><QatIcon kind="open" /></div>
          <div className="ml-[23px]"><QatIcon kind="save" /></div>
          <div className="ml-[20px]"><Undo /></div>
          <div className="ml-[15px]"><Chevron w={12} color="#444" /></div>
          <div className="ml-[11px]"><Undo flip /></div>
          <div className="ml-[17px]"><Chevron w={12} color="#444" /></div>
          <svg width="18" height="28" viewBox="0 0 18 28" className="ml-[32px] shrink-0">
            <path d="M1 2h16M2 10l7 14 7-14" fill="none" stroke="#555" strokeWidth="2" />
          </svg>
        </div>
        <span className="text-[22px] text-[#666]">ArcGISPro</span>
        <div className="absolute left-[1801px] top-[7px] flex h-[47px] w-[359px] items-center rounded-[4px] border-2 border-[#999] pl-[14px] text-[22.2px] italic text-[#777]">
          <Magnifier />
          <span className="ml-[8px]">Command Search (Alt+Q)</span>
        </div>
        <span className="absolute left-[2783px] top-[15px] whitespace-nowrap text-[22.9px] text-[#666]">{"{R} - Escuela Colombiana de Ingeniería Julio Garavito"}</span>
        <div className="ml-auto flex items-center pr-[24px]">
          <div className="flex h-[47px] w-[48px] items-center justify-center rounded-full bg-[#1a1a1a] text-[16px] text-[#999]">{"{R}"}</div>
          <svg width="28" height="34" viewBox="0 0 28 34" className="ml-[31px] shrink-0">
            <path d="M1 28h26M4 28c3-5 2-10 3-15 1-5 4-8 7-8s6 3 7 8c1 5 0 10 3 15" fill="none" stroke="#666" strokeWidth="2" />
            <circle cx="14" cy="3.5" r="2.5" fill="none" stroke="#666" strokeWidth="1.6" />
            <path d="M11 32h6" stroke="#666" strokeWidth="2.4" />
          </svg>
          <span className="ml-[55px] text-[26px] text-[#777]">?</span>
          <div className="ml-[72px] h-[2px] w-[20px] bg-[#666]" />
          <svg width="20" height="20" viewBox="0 0 20 20" className="ml-[68px] shrink-0">
            <path d="M1 6h13v13H1zM5 6V1h14v13h-5" fill="none" stroke="#666" strokeWidth="2" />
          </svg>
          <div className="ml-[68px]"><CloseX size={21} color="#666" /></div>
        </div>
      </div>
      <div className="flex h-[51px] shrink-0 items-start border-b-2 border-[#c8c8c8] pt-[8px] text-[24px] leading-[33px] text-[#333]">
        <span className="ml-[36px]">Project</span>
        <span className="ml-[74px]">Map</span>
        <span className="ml-[66px]">Insert</span>
        <span className="ml-[66px]">Analysis</span>
        <span className="ml-[66px]">View</span>
        <span className="ml-[65px]">Edit</span>
        <span className="ml-[72px]">Imagery</span>
        <span className="ml-[64px]">Share</span>
        <span className="ml-[63px]">Help</span>
      </div>
      <div className="flex min-h-0 flex-1 bg-[#ececec]">
        <ContentsPanel />
        <MapView />
        <CatalogPanel />
      </div>
      <Dialog />
    </div>
  );
}
